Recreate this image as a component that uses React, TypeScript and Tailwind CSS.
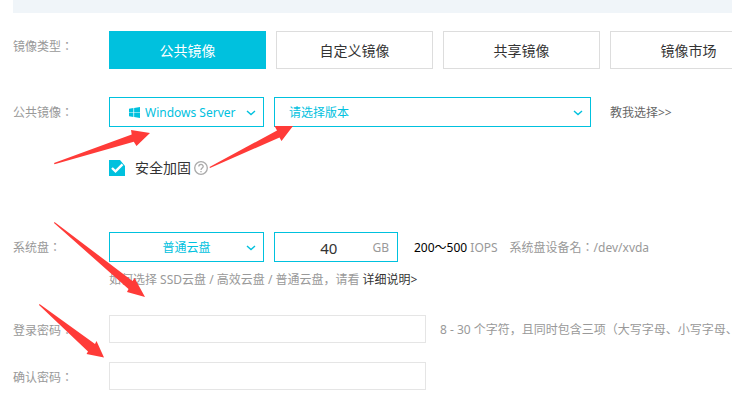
import type { ReactNode } from "react";

const imageTypes = ["公共镜像", "自定义镜像", "共享镜像", "镜像市场"];

const Label = ({ children, htmlFor }: { children: ReactNode; htmlFor?: string }) => (
  <label htmlFor={htmlFor} className="w-24 shrink-0 font-['Noto_Sans','Noto_Sans_CJK_JP',sans-serif] leading-8 text-[#999]">
    {children}
  </label>
);

const Chevron = () => (
  <svg viewBox="0 0 10 6" className="pointer-events-none absolute right-2 top-[13px] h-1.5 w-2.5" fill="none" stroke="#00c1de" strokeWidth="1.4">
    <path d="M1 1 L5 4.6 L9 1" />
  </svg>
);

const WindowsLogo = () => (
  <svg viewBox="0 0 12 12" className="pointer-events-none absolute left-5 top-2.5 h-[11px] w-[11px]" fill="#00c1de">
    <path d="M0 1.8 L4.8 1.1 V5.6 H0 Z M5.6 1 L12 0 V5.6 H5.6 Z M0 6.4 H4.8 V10.9 L0 10.2 Z M5.6 6.4 H12 V12 L5.6 11 Z" />
  </svg>
);

const HelpIcon = () => (
  <svg viewBox="0 0 14 14" className="h-3.5 w-3.5" fill="none" stroke="#aaa" strokeWidth="1.3">
    <circle cx="7" cy="7" r="6.3" />
    <path d="M4.8 5.6 C4.8 2.7 9.2 2.7 9.2 5.4 C9.2 7 7 7 7 8.9" />
    <path d="M7 9.9 V11.3" />
  </svg>
);

const Arrows = () => (
  <svg width="732" height="401" className="pointer-events-none absolute left-0 top-0" fill="#ff3b38" aria-hidden="true">
    <path d="M54 163 L131.7 134.5 L131 130 L150 133 L136.5 146 L133.8 141.8 L54.5 164.2 Z" />
    <path d="M209.5 167 L277 130.5 L274.5 126 L293 126 L281.5 141 L279.5 137.5 L210 168 Z" />
    <path d="M54.5 222 L132.5 281 L134.5 278 L145 297 L127 292 L128.5 289 L54 223 Z" />
    <path d="M39.5 304 L95 344 L96.5 341 L104 357.5 L86.5 354 L88 351.5 L39 305 Z" />
  </svg>
);

const selectClass = "h-[30px] w-full appearance-none rounded-none border border-[#00c1de] bg-white pt-0.5 text-[#00c1de] outline-none";

const App = () => {
  return (
    <main className="relative overflow-hidden bg-white pb-[11px] pl-[13px] font-['Noto_Sans','Noto_Sans_CJK_SC',sans-serif] text-[12px] text-[#999]">
      <header className="h-[13px] bg-[#f0f5f9]" />

      <div className="mt-[18px] flex h-[38px]">
        <Label>镜像类型：</Label>
        <div className="flex gap-2.5">
          {imageTypes.map((name, i) => (
            <button
              key={name}
              type="button"
              className={
                i === 0
                  ? "h-[38px] w-[157px] shrink-0 bg-[#00c1de] pt-0.5 text-sm text-white"
                  : "h-[38px] w-[157px] shrink-0 border border-[#ddd] pt-0.5 text-sm text-[#333]"
              }
            >
              {name}
            </button>
          ))}
        </div>
      </div>

      <div className="mt-7 flex h-[30px]">
        <Label htmlFor="system">公共镜像：</Label>
        <div className="relative w-[155px] shrink-0">
          <select id="system" className={selectClass + " pl-[35px]"}>
            <option>Windows Server</option>
          </select>
          <WindowsLogo />
          <Chevron />
        </div>
        <div className="relative ml-2.5 w-[317px] shrink-0">
          <select aria-label="版本" className={selectClass + " pl-3.5"}>
            <option>请选择版本</option>
          </select>
          <Chevron />
        </div>
        <a href="#" className="ml-[19px] whitespace-nowrap leading-8 text-[#666]">教我选择&gt;&gt;</a>
      </div>

      <div className="ml-24 mt-[31px] flex h-5 items-center">
        <label className="flex items-center text-sm text-[#333]">
          <span className="relative mr-2.5 h-4 w-4">
            <input type="checkbox" defaultChecked className="block h-4 w-4 appearance-none bg-[#00c1de]" />
            <svg viewBox="0 0 16 16" className="pointer-events-none absolute left-0 top-0 h-4 w-4" fill="none">
              <path d="M11 0 H16 V6 Z" fill="#fff" />
              <path d="M3 8 L6.5 11.3 L13.5 4.3" stroke="#fff" strokeWidth="2.4" />
            </svg>
          </span>
          安全加固
        </label>
        <button type="button" aria-label="帮助" className="ml-[3px]">
          <HelpIcon />
        </button>
      </div>

      <div className="mt-[54px] flex h-[30px]">
        <Label htmlFor="disk">系统盘：</Label>
        <div className="relative w-[155px] shrink-0">
          <select id="disk" className={selectClass + " [text-align-last:center]"}>
            <option>普通云盘</option>
          </select>
          <Chevron />
        </div>
        <div className="ml-2.5 flex h-[30px] w-[124px] shrink-0 items-center border border-[#00c1de] pr-2 pt-0.5">
          <input aria-label="容量" defaultValue="40" className="w-0 flex-1 pl-2.5 text-center text-[15px] text-[#333] outline-none" />
          <span>GB</span>
        </div>
        <p className="ml-4 whitespace-nowrap leading-8">
          <span className="text-black">200～500</span> IOPS
        </p>
        <p className="ml-3 whitespace-nowrap font-['Noto_Sans','Noto_Sans_CJK_JP',sans-serif] leading-8">系统盘设备名：/dev/xvda</p>
      </div>
      <p className="ml-24 mt-2 leading-5">
        如何选择 SSD云盘 / 高效云盘 / 普通云盘，请看 <a href="#" className="text-[#333]">详细说明&gt;</a>
      </p>

      <div className="mt-[25px] flex h-7">
        <Label htmlFor="password">登录密码：</Label>
        <input id="password" type="password" className="h-7 w-[317px] shrink-0 border border-[#e5e5e5] px-2 outline-none" />
        <p className="ml-3.5 whitespace-nowrap leading-[30px]">8 - 30 个字符，且同时包含三项（大写字母、小写字母、</p>
      </div>

      <div className="mt-[19px] flex h-7">
        <Label htmlFor="confirm">确认密码：</Label>
        <input id="confirm" type="password" className="h-7 w-[317px] shrink-0 border border-[#e5e5e5] px-2 outline-none" />
      </div>

      <Arrows />
    </main>
  );
};

export default App;
